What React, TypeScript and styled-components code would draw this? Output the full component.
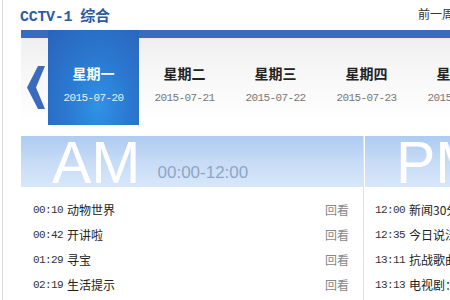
import React from 'react'
import styled, { createGlobalStyle } from 'styled-components'

const GlobalStyle = createGlobalStyle`
  html, body {
    margin: 0;
    padding: 0;
    background: #fff;
    overflow: hidden;
  }
  body {
    font-family: 'Noto Sans CJK SC', 'Noto Sans', sans-serif;
    font-size: 12px;
    color: #333;
  }
`

const Wrapper = styled.div`
  margin-left: 2px;
  border-left: 1px solid #dcdcdc;
  padding-left: 18px;
  width: 520px;
  height: 300px;
`

const Header = styled.div`
  display: flex;
  justify-content: space-between;
  align-items: center;
  height: 30px;
  width: 434px;
  margin-left: -1px;
`

const Title = styled.h1`
  margin: 0;
  font-family: 'Liberation Mono', 'Noto Sans CJK SC', monospace;
  font-size: 15px;
  font-weight: 700;
  color: #2d5aa5;
  letter-spacing: -0.3px;

  span {
    font-family: 'Noto Sans CJK SC', sans-serif;
    margin-left: 8px;
  }
`

const WeekLink = styled.a`
  font-size: 12px;
  color: #333;
  text-decoration: none;
  margin-bottom: 4px;
  white-space: nowrap;
`

const WeekBar = styled.div`
  border-top: 8px solid #3a6cbd;
  height: 87px;
  display: flex;
  background: linear-gradient(to bottom, #efefef 0%, #f7f7f7 40%, #ffffff 100%);
  box-shadow: inset 0 1px 0 #f4e9e2;
`

const ArrowCell = styled.div`
  box-sizing: border-box;
  flex: 0 0 27px;
  display: flex;
  align-items: center;
  justify-content: flex-end;
  padding: 12px 2px 0 0;
`

const DayTab = styled.div<{ active?: boolean }>`
  flex: 0 0 91px;
  display: flex;
  flex-direction: column;
  align-items: center;
  margin-top: ${({ active }) => (active ? '-8px' : '0')};
  padding-top: ${({ active }) => (active ? '34px' : '26px')};
  background: ${({ active }) =>
    active
      ? 'radial-gradient(ellipse at 55% 80%, #2f93e6 0%, #2b78d0 45%, #2a63bb 100%)'
      : 'transparent'};

  .day {
    font-size: 14px;
    font-weight: 700;
    line-height: 18px;
    color: ${({ active }) => (active ? '#fff' : '#222')};
  }

  .date {
    margin-top: 10px;
    font-family: 'Liberation Mono', monospace;
    font-size: 11px;
    letter-spacing: -0.6px;
    line-height: 12px;
    color: ${({ active }) => (active ? '#e6f0ff' : '#777')};
  }
`

const Schedule = styled.div`
  display: flex;
  margin-top: 11px;
`

const Column = styled.div<{ width: number; divided?: boolean }>`
  flex: 0 0 ${({ width }) => width}px;
  border-left: ${({ divided }) => (divided ? '1px solid #dde3ea' : 'none')};
  padding-left: ${({ divided }) => (divided ? '1px' : '0')};
  height: 170px;
`

const Band = styled.div<{ indent: number }>`
  height: 51px;
  display: flex;
  align-items: flex-end;
  padding-left: ${({ indent }) => indent}px;
  background: linear-gradient(to bottom, #aecbf1 0%, #c6dbf6 50%, #d8e7fa 100%);
  overflow: hidden;

  .half {
    font-family: 'Liberation Sans', Arial, sans-serif;
    font-size: 59px;
    line-height: 52px;
    color: #fff;
    margin-bottom: -2px;
  }

  .range {
    font-family: 'Liberation Sans', Arial, sans-serif;
    font-size: 17px;
    color: #8ea6c6;
    margin-left: 17px;
    margin-bottom: 4px;
  }
`

const List = styled.ul<{ indent: number }>`
  list-style: none;
  margin: 0;
  padding: 10px 14px 0 ${({ indent }) => indent}px;
`

const Row = styled.li`
  display: flex;
  align-items: center;
  height: 25px;
  white-space: nowrap;

  .time {
    font-family: 'Liberation Mono', monospace;
    font-size: 11px;
    letter-spacing: -0.6px;
    color: #333;
    width: 34px;
  }

  .name {
    flex: 1;
    font-size: 12px;
    color: #222;
  }

  .replay {
    font-size: 12px;
    color: #888;
  }
`

const Chevron = () => (
  <svg width="19" height="43" viewBox="0 0 19 43">
    <polygon points="11,0 18,0 9,21.5 18,43 11,43 0,21.5" fill="#3a6bbc" />
  </svg>
)

const days = [
  { day: '星期一', date: '2015-07-20', active: true },
  { day: '星期二', date: '2015-07-21' },
  { day: '星期三', date: '2015-07-22' },
  { day: '星期四', date: '2015-07-23' },
  { day: '星期五', date: '2015-07-24' },
]

const morning = [
  ['00:10', '动物世界'],
  ['00:42', '开讲啦'],
  ['01:29', '寻宝'],
  ['02:19', '生活提示'],
]

const afternoon = [
  ['12:00', '新闻30分'],
  ['12:35', '今日说法'],
  ['13:11', '抗战歌曲'],
  ['13:13', '电视剧：'],
]

export default function App() {
  return (
    <>
      <GlobalStyle />
      <Wrapper>
        <Header>
          <Title>
            CCTV-1<span>综合</span>
          </Title>
          <WeekLink>前一周</WeekLink>
        </Header>

        <WeekBar>
          <ArrowCell>
            <Chevron />
          </ArrowCell>
          {days.map((d) => (
            <DayTab key={d.date} active={d.active}>
              <span className="day">{d.day}</span>
              <span className="date">{d.date}</span>
            </DayTab>
          ))}
        </WeekBar>

        <Schedule>
          <Column width={342}>
            <Band indent={31}>
              <span className="half">AM</span>
              <span className="range">00:00-12:00</span>
            </Band>
            <List indent={12}>
              {morning.map(([t, n]) => (
                <Row key={t}>
                  <span className="time">{t}</span>
                  <span className="name">{n}</span>
                  <span className="replay">回看</span>
                </Row>
              ))}
            </List>
          </Column>
          <Column width={160} divided>
            <Band indent={31}>
              <span className="half">PM</span>
            </Band>
            <List indent={10}>
              {afternoon.map(([t, n]) => (
                <Row key={t}>
                  <span className="time">{t}</span>
                  <span className="name">{n}</span>
                </Row>
              ))}
            </List>
          </Column>
        </Schedule>
      </Wrapper>
    </>
  )
}
